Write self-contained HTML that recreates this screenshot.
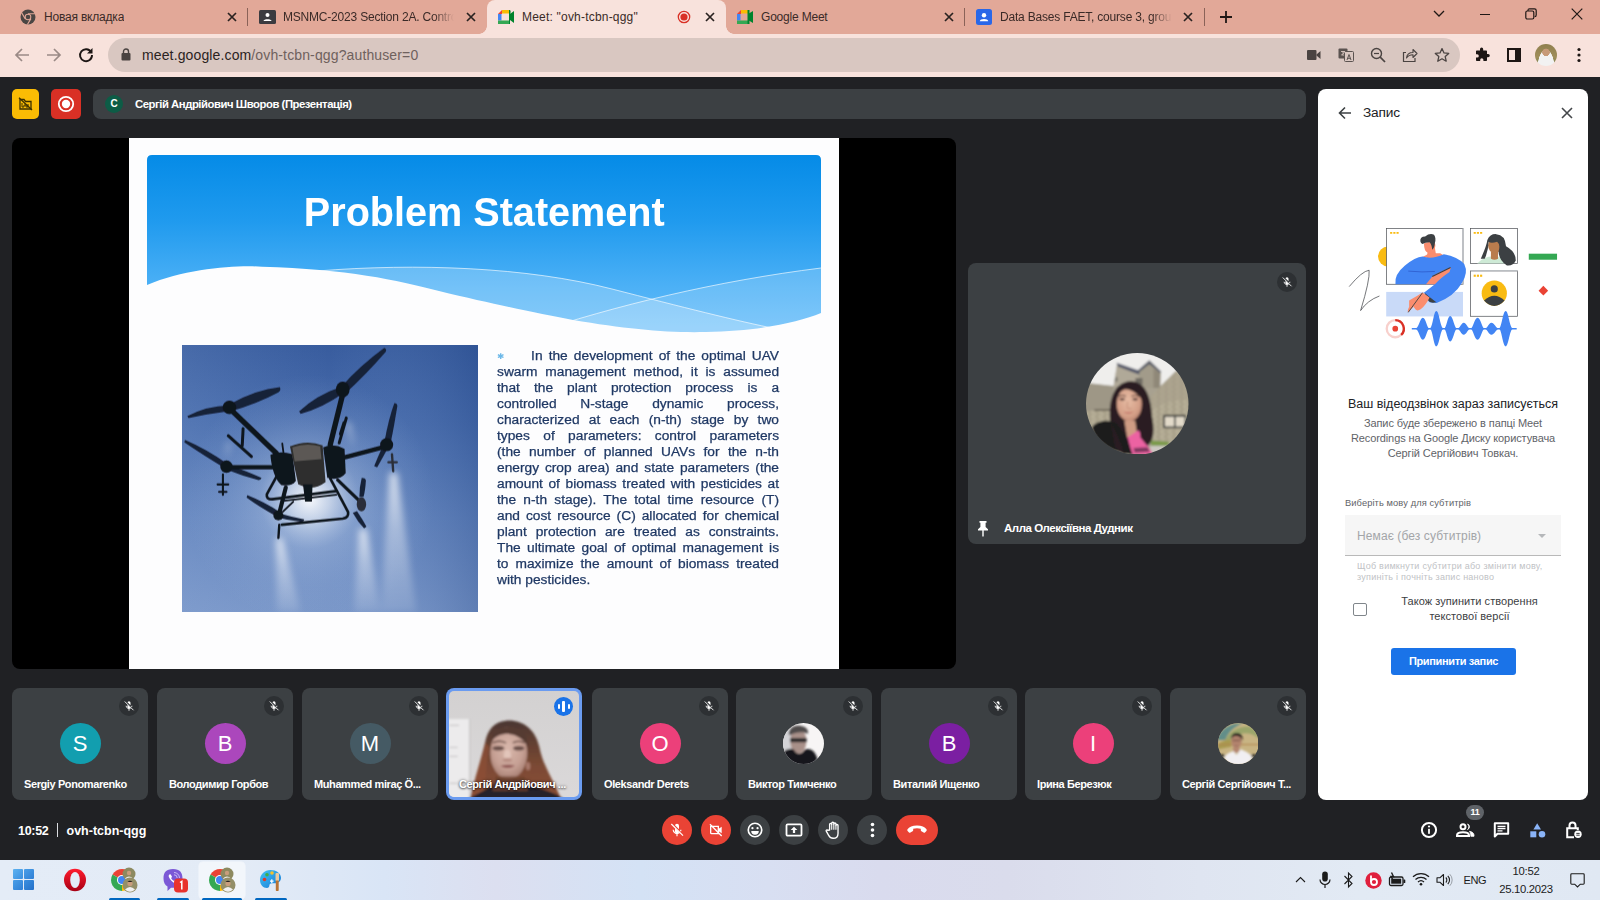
<!DOCTYPE html>
<html><head><meta charset="utf-8">
<style>
*{box-sizing:border-box;margin:0;padding:0}
html,body{width:1600px;height:900px;overflow:hidden;background:#202124;font-family:"Liberation Sans",sans-serif}
.a{position:absolute}
#tabbar{left:0;top:0;width:1600px;height:34px;background:#e2a898}
#toolbar{left:0;top:34px;width:1600px;height:43px;background:#f8e2dc}
#meet{left:0;top:77px;width:1600px;height:783px;background:#202124}
#taskbar{left:0;top:860px;width:1600px;height:40px;background:linear-gradient(90deg,#e4ecf7 0%,#e3ebf6 15%,#d9e5f6 24%,#dcdff0 31%,#d4e2f5 40%,#d8dff2 48%,#d9dbee 55%,#dadcec 63%,#dfe5f1 75%,#e2eaf4 85%,#e0e8f3 100%)}
.tabt{font-size:12px;letter-spacing:-0.2px;color:#3a2a27;top:10px;white-space:nowrap;overflow:hidden}
.tile{background:#3c4043;border-radius:8px}
.nm{color:#fff;font-size:11px;font-weight:bold;white-space:nowrap;letter-spacing:-0.4px}
.av{border-radius:50%;color:#fff;text-align:center;font-size:22px;line-height:42px;width:41px;height:41px}
.mic{width:20px;height:20px;border-radius:50%;background:#2d3033}
.cb{width:30px;height:30px;border-radius:50%;top:815px}
</style></head><body>
<div class="a" id="tabbar"></div>
<div class="a" id="toolbar"></div>
<div class="a" id="meet"></div>
<div class="a" id="taskbar"></div>
<!--TABS-->
<div class="a" style="left:487px;top:0;width:239px;height:34px;background:#f8e2dc;border-radius:8px 8px 0 0"></div>
<div class="a" style="left:479px;top:26px;width:8px;height:8px;background:radial-gradient(circle at 0 0,#e2a898 7.5px,#f8e2dc 8px)"></div>
<div class="a" style="left:726px;top:26px;width:8px;height:8px;background:radial-gradient(circle at 100% 0,#e2a898 7.5px,#f8e2dc 8px)"></div>
<!-- tab1 -->
<svg class="a" style="left:20px;top:9px" width="16" height="16" viewBox="0 0 16 16"><circle cx="8" cy="8" r="7.5" fill="#4a4543"/><circle cx="8" cy="8" r="3.3" fill="#e2a898"/><circle cx="8" cy="8" r="2.3" fill="#4a4543"/><path d="M8 4.7H15 M5.1 9.6 L1.7 3.8 M10.9 9.6 L7.4 15.5" stroke="#e2a898" stroke-width="1.1"/></svg>
<div class="a tabt" style="left:44px">Новая вкладка</div>
<svg class="a" style="left:227px;top:12px" width="10" height="10" viewBox="0 0 10 10"><path d="M1 1L9 9M9 1L1 9" stroke="#2a2220" stroke-width="1.7"/></svg>
<div class="a" style="left:247px;top:8px;width:1px;height:18px;background:#8a6258"></div>
<!-- tab2 -->
<svg class="a" style="left:259px;top:10px" width="17" height="14" viewBox="0 0 17 14"><rect width="17" height="14" rx="1.5" fill="#3b3b40"/><circle cx="8.5" cy="5" r="2" fill="#fff"/><path d="M4.5 11c0-2.5 8-2.5 8 0z" fill="#fff"/></svg>
<div class="a tabt" style="left:283px;width:171px;-webkit-mask-image:linear-gradient(90deg,#000 88%,transparent)">MSNMC-2023 Section 2A. Contro</div>
<svg class="a" style="left:466px;top:12px" width="10" height="10" viewBox="0 0 10 10"><path d="M1 1L9 9M9 1L1 9" stroke="#2a2220" stroke-width="1.7"/></svg>
<!-- tab3 active -->
<svg class="a" style="left:498px;top:10px" width="16" height="14" viewBox="0 0 16 14"><path d="M0 4L4 0V4z" fill="#ea4335"/><rect x="4" y="0" width="7" height="3.5" fill="#fbbc04"/><rect x="0" y="4" width="3.5" height="6.5" fill="#4285f4"/><rect x="0" y="10.5" width="11" height="3.5" fill="#34a853"/><path d="M11 0v14l1-0V10l4 3V1l-4 3V1.2z" fill="#00832d"/><path d="M11 0h0.5q1 0 1 1.2V4L11 5.5z" fill="#00832d"/></svg>
<div class="a tabt" style="left:522px;letter-spacing:0.2px">Meet: "ovh-tcbn-qgg"</div>
<svg class="a" style="left:677px;top:10px" width="14" height="14" viewBox="0 0 14 14"><circle cx="7" cy="7" r="5.7" fill="none" stroke="#d93025" stroke-width="1.3"/><circle cx="7" cy="7" r="3.6" fill="#d93025"/></svg>
<svg class="a" style="left:705px;top:12px" width="10" height="10" viewBox="0 0 10 10"><path d="M1 1L9 9M9 1L1 9" stroke="#2a2220" stroke-width="1.7"/></svg>
<!-- tab4 -->
<svg class="a" style="left:737px;top:10px" width="16" height="14" viewBox="0 0 16 14"><path d="M0 4L4 0V4z" fill="#ea4335"/><rect x="4" y="0" width="7" height="3.5" fill="#fbbc04"/><rect x="0" y="4" width="3.5" height="6.5" fill="#4285f4"/><rect x="0" y="10.5" width="11" height="3.5" fill="#34a853"/><path d="M11 0v14V10l5 3V1l-5 3z" fill="#00832d"/><rect x="10.5" y="0" width="2" height="14" fill="#00832d"/></svg>
<div class="a tabt" style="left:761px">Google Meet</div>
<svg class="a" style="left:944px;top:12px" width="10" height="10" viewBox="0 0 10 10"><path d="M1 1L9 9M9 1L1 9" stroke="#2a2220" stroke-width="1.7"/></svg>
<div class="a" style="left:964px;top:8px;width:1px;height:18px;background:#8a6258"></div>
<!-- tab5 -->
<svg class="a" style="left:976px;top:9px" width="16" height="16" viewBox="0 0 16 16"><rect width="16" height="16" rx="2.5" fill="#2a67e8"/><circle cx="8" cy="6.2" r="2.2" fill="#fff"/><path d="M3.8 12.3c0-3 8.4-3 8.4 0z" fill="#fff"/></svg>
<div class="a tabt" style="left:1000px;width:172px;-webkit-mask-image:linear-gradient(90deg,#000 88%,transparent)">Data Bases FAET, course 3, group</div>
<svg class="a" style="left:1183px;top:12px" width="10" height="10" viewBox="0 0 10 10"><path d="M1 1L9 9M9 1L1 9" stroke="#2a2220" stroke-width="1.7"/></svg>
<div class="a" style="left:1204px;top:8px;width:1px;height:18px;background:#8a6258"></div>
<svg class="a" style="left:1219px;top:10px" width="14" height="14" viewBox="0 0 14 14"><path d="M7 1v12M1 7h12" stroke="#1f1715" stroke-width="1.8"/></svg>
<!-- window controls -->
<svg class="a" style="left:1433px;top:9px" width="12" height="10" viewBox="0 0 12 10"><path d="M1 2l5 5 5-5" fill="none" stroke="#1f1715" stroke-width="1.3"/></svg>
<div class="a" style="left:1480px;top:14px;width:10px;height:1px;background:#1f1715"></div>
<svg class="a" style="left:1525px;top:8px" width="12" height="12" viewBox="0 0 12 12"><rect x="0.8" y="3" width="8" height="8" rx="1.5" fill="none" stroke="#1f1715" stroke-width="1.2"/><path d="M3 3V2.3q0-1.5 1.5-1.5H9.5q1.7 0 1.7 1.7V7q0 1.6-1.5 1.6" fill="none" stroke="#1f1715" stroke-width="1.2"/></svg>
<svg class="a" style="left:1571px;top:8px" width="12" height="12" viewBox="0 0 12 12"><path d="M0.7 0.7l10.6 10.6M11.3 0.7L0.7 11.3" stroke="#1f1715" stroke-width="1.2"/></svg>

<!--/TABS-->
<!--TOOLBAR-->
<div class="a" style="left:108px;top:38px;width:1352px;height:34px;border-radius:17px;background:#d9c7c1"></div>
<svg class="a" style="left:14px;top:47px" width="16" height="16" viewBox="0 0 16 16"><path d="M15 8H2M8 2L2 8l6 6" fill="none" stroke="#9a8a86" stroke-width="1.7"/></svg>
<svg class="a" style="left:46px;top:47px" width="16" height="16" viewBox="0 0 16 16"><path d="M1 8H14M8 2l6 6-6 6" fill="none" stroke="#9a8a86" stroke-width="1.7"/></svg>
<svg class="a" style="left:78px;top:47px" width="16" height="16" viewBox="0 0 16 16"><path d="M13.2 5.2A6 6 0 1 0 14 8" fill="none" stroke="#1d1614" stroke-width="1.9"/><path d="M14.5 1v5.5H9z" fill="#1d1614"/></svg>
<svg class="a" style="left:121px;top:48px" width="10" height="13" viewBox="0 0 10 13"><rect x="0.5" y="5" width="9" height="7.5" rx="1" fill="#4a4341"/><path d="M2.5 5V3.5a2.5 2.5 0 0 1 5 0V5" fill="none" stroke="#4a4341" stroke-width="1.4"/></svg>
<div class="a" style="left:142px;top:47px;font-size:14px;color:#2b2321;white-space:nowrap;letter-spacing:0.13px">meet.google.com<span style="color:#6f615d">/ovh-tcbn-qgg?authuser=0</span></div>
<!-- right icons in url -->
<svg class="a" style="left:1307px;top:49px" width="14" height="12" viewBox="0 0 14 12"><rect x="0" y="1" width="9.5" height="10" rx="1" fill="#4a4341"/><path d="M9.5 5.5L13.5 2v8L9.5 6.5z" fill="#4a4341"/></svg>
<svg class="a" style="left:1338px;top:47px" width="16" height="16" viewBox="0 0 16 16"><rect x="0.5" y="1.5" width="9" height="10" rx="1" fill="#5b5350"/><rect x="6.5" y="4.5" width="9" height="10" rx="1" fill="#d9c7c1" stroke="#5b5350" stroke-width="1"/><path d="M3 4.5h4M5 4v5M3.2 8c2-0.5 3-2 3.3-3.5" stroke="#d9c7c1" stroke-width="0.9" fill="none"/><path d="M9 13l2-5.5 2 5.5M9.8 11.3h2.4" stroke="#5b5350" stroke-width="1" fill="none"/></svg>
<svg class="a" style="left:1370px;top:47px" width="16" height="16" viewBox="0 0 16 16"><circle cx="6.5" cy="6.5" r="5" fill="none" stroke="#4a4341" stroke-width="1.4"/><path d="M10.2 10.2L15 15" stroke="#4a4341" stroke-width="1.7"/><path d="M4 6.5h5" stroke="#4a4341" stroke-width="1.2"/></svg>
<svg class="a" style="left:1402px;top:47px" width="16" height="16" viewBox="0 0 16 16"><path d="M4 5.5H1.5V14.5H13V11" fill="none" stroke="#4a4341" stroke-width="1.2"/><path d="M4.5 11c.5-4 3-5.5 6.5-5.5V2.5L15 6.5 11 10.5V7.7C8 7.7 6 8.5 4.5 11z" fill="none" stroke="#4a4341" stroke-width="1.1" stroke-linejoin="round"/></svg>
<svg class="a" style="left:1434px;top:47px" width="16" height="16" viewBox="0 0 16 16"><path d="M8 1.6l2 4.3 4.7.5-3.5 3.2 1 4.6L8 11.8l-4.2 2.4 1-4.6L1.3 6.4 6 5.9z" fill="none" stroke="#4a4341" stroke-width="1.3" stroke-linejoin="round"/></svg>
<!-- extensions etc -->
<svg class="a" style="left:1474px;top:47px" width="16" height="16" viewBox="0 0 16 16"><path d="M6 2.2a1.6 1.6 0 0 1 3.2 0V3.5h3q.8 0 .8.8v2.7h1.2a1.6 1.6 0 0 1 0 3.2H13v3q0 .8-.8.8H9.4v-1.2a1.6 1.6 0 0 0-3.2 0V14H2.8q-.8 0-.8-.8V10.5h1.2a1.6 1.6 0 0 0 0-3.2H2V4.3q0-.8.8-.8H6z" fill="#1d1614"/></svg>
<svg class="a" style="left:1507px;top:48px" width="14" height="14" viewBox="0 0 14 14"><rect x="1" y="1" width="12" height="12" fill="none" stroke="#1d1614" stroke-width="2"/><rect x="8" y="1" width="5" height="12" fill="#1d1614"/></svg>
<div class="a" style="left:1535px;top:44px;width:22px;height:22px;border-radius:50%;background:radial-gradient(circle at 50% 38%,#c79a78 0 3.5px,transparent 4px),radial-gradient(ellipse at 50% 105%,#f2f2f2 0 8px,transparent 8.5px),linear-gradient(#8f7f4e,#a08e5a 60%,#6e7e4a)"></div>
<svg class="a" style="left:1577px;top:47px" width="4" height="16" viewBox="0 0 4 16"><circle cx="2" cy="2.5" r="1.6" fill="#1d1614"/><circle cx="2" cy="8" r="1.6" fill="#1d1614"/><circle cx="2" cy="13.5" r="1.6" fill="#1d1614"/></svg>

<!--/TOOLBAR-->
<!--MEETTOP-->
<div class="a" style="left:12px;top:89px;width:27px;height:30px;border-radius:5px;background:#fbbc04"></div>
<svg class="a" style="left:18px;top:97px" width="15" height="14" viewBox="0 0 15 14"><path d="M2 2.5V12H13V4.5H7.5L6 2.5z" fill="none" stroke="#3c3000" stroke-width="1.3"/><path d="M4 6v4h2V8h2v2h2V7" fill="none" stroke="#3c3000" stroke-width="1"/><path d="M1 0.8L14 13" stroke="#3c3000" stroke-width="1.3"/></svg>
<div class="a" style="left:51px;top:89px;width:30px;height:30px;border-radius:5px;background:#d93025"></div>
<svg class="a" style="left:57px;top:95px" width="18" height="18" viewBox="0 0 18 18"><circle cx="9" cy="9" r="7.2" fill="none" stroke="#fff" stroke-width="1.8"/><circle cx="9" cy="9" r="4.2" fill="#fff"/></svg>
<div class="a tile" style="left:93px;top:89px;width:1213px;height:30px"></div>
<div class="a" style="left:105px;top:95px;width:18px;height:18px;border-radius:50%;background:#0d5c46;color:#fff;font-size:10px;font-weight:bold;text-align:center;line-height:18px">С</div>
<div class="a nm" style="left:135px;top:98px;font-size:11.3px;letter-spacing:-0.45px">Сергій Андрійович Шворов (Презентація)</div>

<!--/MEETTOP-->
<!--SLIDE-->
<div class="a" style="left:12px;top:138px;width:944px;height:531px;border-radius:8px;background:#000"></div>
<div class="a" style="left:129px;top:138px;width:710px;height:531px;background:#fdfdfe"></div>
<svg class="a" style="left:147px;top:155px" width="674" height="186" viewBox="0 0 674 186">
<defs><linearGradient id="hg" x1="0" y1="0" x2="0" y2="1"><stop offset="0" stop-color="#058be7"/><stop offset="0.35" stop-color="#1f9aee"/><stop offset="0.7" stop-color="#4bb0f6"/><stop offset="1" stop-color="#6cc0fa"/></linearGradient></defs>
<path d="M0 5Q0 0 5 0H669Q674 0 674 5V186H0z" fill="url(#hg)"/>
<path d="M170 116C270 108 380 112 465 134C535 152 590 166 630 174L674 160V186H170z" fill="#fff" opacity="0.22"/>
<path d="M380 180C470 150 570 126 674 113V186H380z" fill="#fff" opacity="0.17"/>
<path d="M170 116C270 108 380 112 465 134C535 152 590 166 630 174" fill="none" stroke="#fff" stroke-width="0.8" opacity="0.8"/>
<path d="M380 180C470 150 570 126 674 113" fill="none" stroke="#fff" stroke-width="0.8" opacity="0.8"/>
<path d="M0 130C40 113 90 110 115 111.7C200 114 250 125 292 136C350 150 390 158 426 165C480 174 520 178 559 177C610 176 650 168 674 158V186H0z" fill="#fdfdfe"/>
</svg>
<div class="a" id="ttl" style="left:129px;top:187.5px;width:710px;text-align:center;color:#fff;font-weight:bold;font-size:40px;line-height:48px;white-space:nowrap"><span style="display:inline-block;transform:scaleX(0.99);transform-origin:50% 50%">Problem Statement</span></div>
<!--DRONE-->
<svg class="a" style="left:182px;top:345px" width="296" height="267" viewBox="0 0 998 900" preserveAspectRatio="none">
<defs>
<linearGradient id="sky" x1="0" y1="0" x2="0" y2="1"><stop offset="0" stop-color="#385c9e"/><stop offset="0.3" stop-color="#486cac"/><stop offset="0.65" stop-color="#6384bd"/><stop offset="1" stop-color="#7996c8"/></linearGradient>
<linearGradient id="skyr" x1="0" y1="0" x2="1" y2="0"><stop offset="0" stop-color="#9fbce6" stop-opacity="0.15"/><stop offset="0.5" stop-color="#8fb0e0" stop-opacity="0"/><stop offset="1" stop-color="#1c3f80" stop-opacity="0.28"/></linearGradient>
<radialGradient id="sun" cx="430" cy="520" r="420" gradientUnits="userSpaceOnUse"><stop offset="0" stop-color="#fff" stop-opacity="0.95"/><stop offset="0.16" stop-color="#f4f8fd" stop-opacity="0.68"/><stop offset="0.4" stop-color="#c5d6ee" stop-opacity="0.3"/><stop offset="0.7" stop-color="#a9c0e2" stop-opacity="0.14"/><stop offset="1" stop-color="#9fb8dd" stop-opacity="0"/></radialGradient>
<linearGradient id="spr" x1="0" y1="0" x2="0" y2="1"><stop offset="0" stop-color="#fff" stop-opacity="0.75"/><stop offset="0.4" stop-color="#fff" stop-opacity="0.4"/><stop offset="1" stop-color="#fff" stop-opacity="0.12"/></linearGradient>
<filter id="bl" x="-30%" y="-10%" width="160%" height="120%"><feGaussianBlur stdDeviation="13"/></filter>
<filter id="bs" x="-10%" y="-10%" width="120%" height="120%"><feGaussianBlur stdDeviation="2.5"/></filter>
</defs>
<rect width="998" height="900" fill="url(#sky)"/>
<rect width="998" height="900" fill="url(#skyr)"/>
<rect width="998" height="900" fill="url(#sun)"/>
<g filter="url(#bl)" fill="url(#spr)">
<path d="M700 430L725 430L790 900L670 900z"/>
<path d="M318 650L338 650L400 900L320 900z"/>
<path d="M598 620L622 620L670 900L580 900z"/>
<path d="M552 262L566 262L586 335L566 335z" opacity="0.8"/>
<path d="M150 330L165 330L160 380L140 380z" opacity="0.5"/>
</g>
<g filter="url(#bs)">
<g fill="#172038">
<path d="M18 240Q80 205 160 203L165 222Q90 232 22 246z"/><path d="M160 200Q250 150 330 142Q335 152 325 160Q250 200 168 222z"/>
<path d="M395 224Q450 170 538 140L548 160Q470 215 400 232z"/><path d="M538 140Q600 70 682 10Q692 14 686 24Q620 100 552 162z"/>
<path d="M648 408Q668 360 684 326L700 336Q680 375 658 412z"/><path d="M682 330Q696 250 716 196Q726 196 726 206Q716 270 702 338z"/>
<path d="M10 320Q80 350 152 400L146 416Q70 370 8 328z"/><path d="M150 402Q220 425 268 448Q266 456 258 455Q200 440 146 418z"/>
<path d="M220 506Q280 530 328 562L320 578Q260 545 218 514z"/><path d="M322 566Q370 580 412 588Q412 596 404 596Q360 592 318 580z"/>
<path d="M606 448Q618 448 620 456Q618 490 612 512L598 512Q598 480 606 448z"/><path d="M576 566L590 560Q610 590 622 612L614 618Q592 596 576 566z"/>
</g>
<g stroke="#10131c" stroke-linecap="round" fill="none">
<path d="M165 218L318 365" stroke-width="18"/>
<path d="M542 165L500 335" stroke-width="18"/>
<path d="M688 342L550 378" stroke-width="15"/>
<path d="M152 412L305 412" stroke-width="15"/>
<path d="M525 455L603 530" stroke-width="11"/>
<path d="M350 480L326 575" stroke-width="14"/>
<path d="M318 445L286 503Q283 520 304 520L522 492" stroke-width="9"/>
<path d="M500 450L560 563Q563 582 542 585L337 606" stroke-width="9"/>
<path d="M345 525L520 505M375 528L340 562" stroke-width="6"/>
<path d="M206 282L203 340M156 306L234 376" stroke-width="10"/>
<path d="M554 246L530 330M546 262L534 300" stroke-width="10"/>
<path d="M338 332L342 362" stroke-width="6"/>
<path d="M328 606L325 650" stroke-width="8"/>
<path d="M138 436V505M120 470H156M125 495L150 495" stroke-width="7"/>
<path d="M708 368L712 425M696 395H724" stroke-width="8" stroke="#2c2f38"/>
</g>
<g fill="#10131c">
<circle cx="160" cy="210" r="23"/><ellipse cx="542" cy="150" rx="23" ry="27"/><circle cx="690" cy="336" r="22"/><circle cx="150" cy="410" r="21"/><ellipse cx="605" cy="537" rx="16" ry="24" fill="#2c2f3a"/><circle cx="325" cy="574" r="17"/>
<path d="M298 370Q330 355 372 368L384 458Q370 478 335 472Q305 445 298 370z"/>
<path d="M476 345Q510 330 548 350L552 432Q532 458 490 448z"/>
<path d="M364 342Q420 318 474 338L484 462Q440 495 392 470z" fill="#2f2f2f"/>
<path d="M372 345Q420 328 466 342L470 385L380 392z" fill="#5b5955"/>
<path d="M408 470L440 470L438 528L415 528z"/>
</g>
</g>
</svg>

<!--/DRONE-->
<div class="a" id="stxt" style="left:497px;top:347.5px;width:256.4px;transform:scaleX(1.1);transform-origin:0 0;font-size:12.5px;line-height:16px;color:#1f3864;-webkit-text-stroke:0.25px #1f3864;text-align:justify;text-align-last:justify">
<div><span style="color:#6cb8e8;font-size:8px;vertical-align:1.5px;-webkit-text-stroke:0">✱</span><span style="display:inline-block;width:24px"></span>In the development of the optimal UAV</div>
<div>swarm management method, it is assumed</div>
<div>that the plant protection process is a</div>
<div>controlled N-stage dynamic process,</div>
<div>characterized at each (n-th) stage by two</div>
<div>types of parameters: control parameters</div>
<div>(the number of planned UAVs for the n-th</div>
<div>energy crop area) and state parameters (the</div>
<div>amount of biomass treated with pesticides at</div>
<div>the n-th stage). The total time resource (T)</div>
<div>and cost resource (C) allocated for chemical</div>
<div>plant protection are treated as constraints.</div>
<div>The ultimate goal of optimal management is</div>
<div>to maximize the amount of biomass treated</div>
<div style="text-align-last:left">with pesticides.</div>
</div>

<!--/SLIDE-->
<!--ALLA-->
<div class="a tile" style="left:968px;top:263px;width:338px;height:281px"></div>
<div class="a mic" style="left:1277px;top:272px"></div>
<svg class="a micsvg" style="left:1281px;top:276px" width="12" height="12" viewBox="0 0 24 24"><use href="#micoff"/></svg>
<svg class="a" style="left:1086px;top:352.5px" width="102.5" height="101.7" viewBox="155 135 615 610">
<defs><clipPath id="ac"><ellipse cx="462.5" cy="440" rx="307.5" ry="305"/></clipPath><filter id="ab" x="-5%" y="-5%" width="110%" height="110%"><feGaussianBlur stdDeviation="5"/></filter>
<radialGradient id="fc" cx="0.45" cy="0.4" r="0.65"><stop offset="0" stop-color="#e6bba3"/><stop offset="0.7" stop-color="#d5a088"/><stop offset="1" stop-color="#b9826e"/></radialGradient>
<pattern id="stn" width="46" height="30" patternUnits="userSpaceOnUse"><rect width="46" height="30" fill="#aea68f"/><rect x="2" y="2" width="20" height="11" rx="3" fill="#bcb49c"/><rect x="26" y="3" width="17" height="10" rx="3" fill="#a39b85"/><rect x="12" y="17" width="22" height="10" rx="3" fill="#b7af98"/><rect x="37" y="18" width="12" height="9" rx="3" fill="#9c947e"/></pattern></defs>
<g clip-path="url(#ac)"><g filter="url(#ab)">
<rect x="140" y="120" width="650" height="640" fill="#efeeec"/>
<path d="M140 312L320 333L342 198L470 245L535 195L605 250L600 335L700 238L790 330V760H140z" fill="#a8a190"/>
<path d="M322 333L342 205L468 250L505 290L500 335z" fill="#b0a998"/>
<path d="M338 193L346 216L468 262L512 292L472 240z" fill="#55586a"/>
<path d="M463 242L535 178L607 247L600 256L535 202L472 252z" fill="#5a5d68"/>
<path d="M474 252L535 204L600 256V345H474z" fill="#a29b8a"/>
<path d="M560 230L600 256V345H560z" fill="#8f8878"/>
<path d="M140 315L320 335V485H140z" fill="#9e9786"/>
<rect x="140" y="482" width="190" height="280" fill="url(#stn)"/>
<path d="M545 395L700 238L790 330V700H545z" fill="url(#stn)"/>
<path d="M545 395L700 238L790 330V420Q660 400 545 480z" fill="#a69e8b" opacity="0.6"/>
<rect x="452" y="285" width="42" height="40" fill="#6e6a62"/><rect x="330" y="280" width="14" height="26" fill="#76726a"/>
<rect x="205" y="472" width="100" height="11" fill="#6e675a"/>
<rect x="617" y="506" width="137" height="80" fill="#3f413e"/>
<rect x="629" y="518" width="54" height="58" fill="#e2dac9"/><rect x="693" y="518" width="53" height="58" fill="#e2dac9"/>
<path d="M545 660L655 668L645 692L545 692z" fill="#7a9a4a"/>
<path d="M540 692H700V760H540z" fill="#cbc7c0"/>
<path d="M302 565C285 430 318 308 422 304C522 304 547 420 552 520C568 600 562 660 525 692L385 742L305 702z" fill="#2a1e23"/>
<ellipse cx="415" cy="442" rx="75" ry="103" fill="url(#fc)"/>
<path d="M336 405C340 332 400 316 440 330C482 340 502 382 497 425C472 382 430 352 392 352C362 360 346 382 336 405z" fill="#2a1e23"/>
<path d="M385 540L450 540L462 622L402 642z" fill="#cf9c84"/>
<ellipse cx="372" cy="413" rx="17" ry="7" fill="#3a2826"/><ellipse cx="450" cy="413" rx="17" ry="7" fill="#3a2826"/>
<path d="M350 394q22-10 44 0M428 394q22-10 44 0" stroke="#3a2826" stroke-width="6" fill="none"/>
<path d="M405 425q-6 30 0 42q10 6 22 0" stroke="#c48e78" stroke-width="6" fill="none"/>
<path d="M378 486Q410 500 444 484Q410 512 378 486z" fill="#b5524f"/>
<path d="M405 640L470 598L525 690L560 745H430z" fill="#ec62a2"/>
<path d="M440 705l85-5l12 28l-90 4z" fill="#5a2a48" opacity="0.75"/>
<path d="M190 580C225 535 300 530 340 560L402 642L435 747L330 722C258 692 200 640 190 580z" fill="#1a1a1d"/>
<path d="M302 545C322 600 362 650 382 742L330 702z" fill="#2a1e23"/>
<path d="M472 520C502 560 545 620 522 692L482 642z" fill="#2a1e23"/>
</g></g></svg>
<svg class="a" style="left:977px;top:520px" width="12" height="17" viewBox="0 0 12 17"><path d="M2.5 1h7v1.8H8.6V7L11 9.3V10.5H6.7V16L6 17 5.3 16V10.5H1V9.3L3.4 7V2.8H2.5z" fill="#fff"/></svg>
<div class="a nm" style="left:1004px;top:522px;font-size:11.5px;letter-spacing:-0.45px">Алла Олексіївна Дудник</div>
<svg width="0" height="0" style="position:absolute"><defs><g id="micoff"><path d="M12 2.5a3 3 0 0 1 3 3v5.2l-6-6V5.5a3 3 0 0 1 3-3zM9 9.3l6 6a3 3 0 0 1-6-3.3z" fill="#fff"/><path d="M6.2 11.5a5.8 5.8 0 0 0 9.6 4.3M17.8 11.5c0 .9-.2 1.7-.5 2.4M12 17.5V21.5" stroke="#fff" stroke-width="1.7" fill="none"/><path d="M3.5 3L21 20.5" stroke="#fff" stroke-width="1.8"/></g></defs></svg>

<!--/ALLA-->
<!--PANEL-->
<div class="a" style="left:1318px;top:89px;width:270px;height:711px;border-radius:8px;background:#fff"></div>
<svg class="a" style="left:1338px;top:106px" width="14" height="14" viewBox="0 0 14 14"><path d="M13 7H2M7 1.5L1.5 7 7 12.5" fill="none" stroke="#3c4043" stroke-width="1.6"/></svg>
<div class="a" style="left:1363px;top:104.7px;font-size:13.7px;color:#202124;letter-spacing:-0.2px">Запис</div>
<svg class="a" style="left:1561px;top:107px" width="12" height="12" viewBox="0 0 12 12"><path d="M1 1l10 10M11 1L1 11" stroke="#44474a" stroke-width="1.6"/></svg>
<!--ILLUS-->
<svg class="a" style="left:1330px;top:200px" width="250" height="160" viewBox="0 0 1406 900">
<circle cx="326" cy="318" r="56" fill="#f9bb12"/>
<rect x="316" y="517" width="432" height="138" fill="#c9daf8"/>
<rect x="318" y="160" width="430" height="314" fill="#fff" stroke="#4d5156" stroke-width="4"/>
<rect x="744" y="160" width="6" height="316" fill="#bdc1c6"/>
<rect x="790" y="160" width="264" height="197" fill="#fff" stroke="#4d5156" stroke-width="4"/>
<rect x="790" y="399" width="264" height="255" fill="#fff" stroke="#4d5156" stroke-width="4"/>
<rect x="790" y="395" width="266" height="6" fill="#bdc1c6"/>
<g fill="#f9bb12"><rect x="338" y="180" width="12" height="10"/><rect x="356" y="180" width="12" height="10"/><rect x="374" y="180" width="12" height="10"/><rect x="808" y="180" width="12" height="10"/><rect x="826" y="180" width="12" height="10"/><rect x="844" y="180" width="12" height="10"/><rect x="808" y="420" width="12" height="12"/><rect x="826" y="420" width="12" height="12"/><rect x="844" y="420" width="12" height="12"/></g>
<!-- woman -->
<path d="M828 357Q860 318 920 316Q975 318 1010 357z" fill="#ceead6"/>
<path d="M905 290h40v40q-20 12-40 0z" fill="#b97c4d"/>
<ellipse cx="927" cy="255" rx="38" ry="45" fill="#b97c4d"/>
<path d="M848 330Q880 260 885 225Q900 190 935 192Q985 195 990 260Q1045 290 1045 340Q1030 372 995 368Q950 340 948 290Q960 250 940 235Q905 245 892 235Q890 290 870 330z" fill="#3c4043"/>
<!-- yellow avatar -->
<circle cx="924" cy="524" r="71" fill="#f9bb12"/>
<circle cx="924" cy="500" r="20" fill="#3c4043"/>
<path d="M866 566Q924 510 982 566Q955 596 924 596Q893 596 866 566z" fill="#3c4043"/>
<!-- man -->
<path d="M528 245Q530 290 548 296L545 330L600 330L590 270Q598 240 580 228z" fill="#fa8d6e"/>
<path d="M508 232Q505 205 535 205Q560 185 585 195Q598 215 590 240Q588 268 575 280Q572 250 560 238Q535 240 520 248Q510 245 508 232z" fill="#3c4043"/>
<path d="M520 320L560 300L620 300L640 312L580 330z" fill="#fa8d6e"/>
<path d="M368 474Q360 420 420 370Q480 320 520 318Q575 335 640 305Q720 320 755 360Q780 410 740 470Q700 540 600 580L560 575Q545 545 530 520L590 474z" fill="#4285f4"/>
<path d="M440 400Q520 408 590 402" stroke="#2a56c6" stroke-width="4" fill="none"/>
<path d="M540 474L580 425Q640 395 680 380L672 405Q620 440 590 474z" fill="#fa8d6e"/>
<path d="M575 430L678 380" stroke="#3c4043" stroke-width="7"/>
<path d="M530 520L560 545L598 575Q570 582 555 570z" fill="#3c4043"/>
<path d="M445 565Q490 540 520 520L560 548Q540 590 510 615Q490 628 480 615L470 600L440 632Q432 628 445 600z" fill="#fa8d6e"/>
<path d="M520 522L440 632" stroke="#3c4043" stroke-width="5"/>
<!-- scribble -->
<path d="M108 487Q180 400 220 395Q225 450 172 622Q210 565 278 540" fill="none" stroke="#3c4043" stroke-width="4"/>
<!-- green bar, red diamond -->
<rect x="1118" y="302" width="159" height="34" fill="#34a853"/>
<path d="M1200 483L1227 510L1200 537L1173 510z" fill="#ea4335"/>
<!-- record icon -->
<circle cx="367" cy="724" r="48" fill="none" stroke="#f8d0cc" stroke-width="13"/>
<path d="M367 676A48 48 0 0 1 400 759" fill="none" stroke="#d93025" stroke-width="13"/>
<circle cx="367" cy="724" r="16" fill="#ea4335"/>
<!-- waveform -->
<path d="M460 724H1050" stroke="#4285f4" stroke-width="8"/>
<path d="M478 724C500 724 505 662 522 662C540 662 545 724 560 724C578 724 582 625 598 625C615 625 620 724 640 724C655 724 660 652 676 652C692 652 700 724 715 724C730 724 738 690 752 690C768 690 775 724 790 724C805 724 812 662 830 662C848 662 855 724 870 724C885 724 892 690 908 690C925 690 935 724 950 724C965 724 972 625 988 625C1005 625 1010 724 1030 724C1010 724 1005 823 988 823C972 823 965 724 950 724C935 724 925 758 908 758C892 758 885 724 870 724C855 724 848 786 830 786C812 786 805 724 790 724C775 724 768 758 752 758C738 758 730 724 715 724C700 724 692 796 676 796C660 796 655 724 640 724C620 724 615 823 598 823C582 823 578 724 560 724C545 724 540 786 522 786C505 786 500 724 478 724z" fill="#4285f4"/>
</svg>

<!--/ILLUS-->
<div class="a" style="left:1318px;top:397px;width:270px;text-align:center;font-size:12.5px;color:#202124;letter-spacing:-0.02px">Ваш відеодзвінок зараз записується</div>
<div class="a" style="left:1338px;top:416px;width:230px;text-align:center;font-size:11px;line-height:15px;color:#5f6368;letter-spacing:-0.1px">Запис буде збережено в папці Meet<br>Recordings на Google Диску користувача<br>Сергій Сергійович Товкач.</div>
<div class="a" style="left:1345px;top:498px;font-size:9.3px;color:#5f6368;letter-spacing:0.1px">Виберіть мову для субтитрів</div>
<div class="a" style="left:1345px;top:515px;width:216px;height:41px;background:#f6f6f6;border-bottom:1px solid #b9b9b9"></div>
<div class="a" style="left:1357px;top:529px;font-size:12px;color:#a3a5a8;letter-spacing:0.1px">Немає (без субтитрів)</div>
<div class="a" style="left:1538px;top:534px;width:0;height:0;border-left:4px solid transparent;border-right:4px solid transparent;border-top:4px solid #b5b7ba"></div>
<div class="a" style="left:1357px;top:561px;font-size:9px;line-height:11px;color:#c0c2c5;letter-spacing:0.25px">Щоб вимкнути субтитри або змінити мову,<br>зупиніть і почніть запис наново</div>
<div class="a" style="left:1353px;top:603px;width:14px;height:13px;border:1px solid #80868b;border-radius:2px;background:#fff"></div>
<div class="a" style="left:1390px;top:594px;width:159px;text-align:center;font-size:11px;line-height:15px;color:#3c4043;letter-spacing:0.05px">Також зупинити створення<br>текстової версії</div>
<div class="a" style="left:1391px;top:648px;width:125px;height:27px;border-radius:3px;background:#1a73e8;color:#fff;font-size:11px;font-weight:bold;text-align:center;line-height:27px;letter-spacing:-0.35px">Припинити запис</div>

<!--/PANEL-->
<!--THUMBS-->
<div class="a tile" style="left:12px;top:688px;width:136px;height:112px"></div>
<div class="a mic" style="left:119px;top:696px"></div><svg class="a" style="left:123px;top:700px" width="12" height="12" viewBox="0 0 24 24"><use href="#micoff"/></svg>
<div class="a av" style="left:59.5px;top:722.5px;background:#129eaf">S</div>
<div class="a nm" style="left:24px;top:778px">Sergiy Ponomarenko</div>
<div class="a tile" style="left:157px;top:688px;width:136px;height:112px"></div>
<div class="a mic" style="left:264px;top:696px"></div><svg class="a" style="left:268px;top:700px" width="12" height="12" viewBox="0 0 24 24"><use href="#micoff"/></svg>
<div class="a av" style="left:204.5px;top:722.5px;background:#ab47bc">В</div>
<div class="a nm" style="left:169px;top:778px">Володимир Горбов</div>
<div class="a tile" style="left:302px;top:688px;width:136px;height:112px"></div>
<div class="a mic" style="left:409px;top:696px"></div><svg class="a" style="left:413px;top:700px" width="12" height="12" viewBox="0 0 24 24"><use href="#micoff"/></svg>
<div class="a av" style="left:349.5px;top:722.5px;background:#455a64">M</div>
<div class="a nm" style="left:314px;top:778px">Muhammed miraç Ö...</div>
<div class="a" style="left:446px;top:688px;width:136px;height:112px;border-radius:8px;background:#6a9bf0;overflow:hidden">
<svg class="a" style="left:3px;top:3px;border-radius:5px" width="130" height="106" viewBox="67 65 942 768" preserveAspectRatio="none">
<defs><filter id="vb" x="-10%" y="-10%" width="120%" height="120%"><feGaussianBlur stdDeviation="9"/></filter><linearGradient id="wl" x1="0" y1="0" x2="0" y2="1"><stop offset="0" stop-color="#b5b3b3"/><stop offset="0.08" stop-color="#d3d1d1"/><stop offset="1" stop-color="#dbd9da"/></linearGradient><radialGradient id="fcv" cx="0.48" cy="0.4" r="0.62"><stop offset="0" stop-color="#d8b7ab"/><stop offset="0.65" stop-color="#c6a094"/><stop offset="1" stop-color="#a67e72"/></radialGradient><linearGradient id="hr" x1="0" y1="0" x2="0" y2="1"><stop offset="0" stop-color="#4a3630"/><stop offset="0.6" stop-color="#7d4a34"/><stop offset="1" stop-color="#8a4e34"/></linearGradient></defs>
<rect x="0" y="0" width="1100" height="900" fill="url(#wl)"/>
<g filter="url(#vb)">
<rect x="40" y="268" width="172" height="600" fill="#ecebec"/><rect x="212" y="268" width="10" height="600" fill="#c9c7c8"/>
<rect x="70" y="310" width="70" height="8" fill="#c5c3c4"/><rect x="70" y="470" width="60" height="8" fill="#c5c3c4"/><rect x="70" y="535" width="60" height="8" fill="#c5c3c4"/><rect x="70" y="730" width="60" height="8" fill="#c5c3c4"/>
<path d="M480 280C395 288 345 345 328 440C300 560 255 690 220 850H880C830 720 745 600 722 470C690 338 600 272 480 280z" fill="url(#hr)"/>
<path d="M330 440C300 560 255 690 220 850H330C330 700 340 560 360 470z" fill="#8f5034" opacity="0.7"/>
<ellipse cx="500" cy="515" rx="134" ry="188" fill="url(#fcv)"/>
<path d="M368 440C385 350 470 318 530 328C600 338 642 400 640 470C600 395 520 372 470 376C420 382 388 405 368 440z" fill="#553a32"/>
<ellipse cx="425" cy="480" rx="42" ry="17" fill="#6a4f49"/><ellipse cx="572" cy="480" rx="40" ry="17" fill="#6a4f49"/>
<path d="M385 440q45-22 95 0M530 440q42-20 85 0" stroke="#5b4038" stroke-width="10" fill="none"/>
<ellipse cx="490" cy="530" rx="26" ry="40" fill="#e2c5ba"/><ellipse cx="490" cy="565" rx="34" ry="14" fill="#b98f84"/>
<path d="M440 608Q495 590 545 606Q495 640 440 608z" fill="#8f5552"/>
<ellipse cx="640" cy="610" rx="16" ry="30" fill="#a8786a"/>
<path d="M200 850C300 790 380 770 420 705L600 705C640 770 800 770 900 850V900H200z" fill="#25242a"/>
<path d="M405 685L615 685L640 790L380 790z" fill="#70432f" opacity="0.85"/>
</g></svg>
<div class="a" style="left:108px;top:9px;width:19px;height:19px;border-radius:50%;background:#1a73e8"></div>
<div class="a" style="left:111.5px;top:16px;width:2px;height:5px;background:#fff;border-radius:1px"></div><div class="a" style="left:116px;top:13px;width:3px;height:11px;background:#fff;border-radius:1px"></div><div class="a" style="left:121.5px;top:16px;width:2px;height:5px;background:#fff;border-radius:1px"></div>
</div>
<div class="a nm" style="left:459px;top:778px;text-shadow:0 0 3px rgba(0,0,0,.6),0 1px 2px rgba(0,0,0,.5)">Сергій Андрійович ...</div>
<div class="a tile" style="left:592px;top:688px;width:136px;height:112px"></div>
<div class="a mic" style="left:699px;top:696px"></div><svg class="a" style="left:703px;top:700px" width="12" height="12" viewBox="0 0 24 24"><use href="#micoff"/></svg>
<div class="a av" style="left:639.5px;top:722.5px;background:#ec407a">O</div>
<div class="a nm" style="left:604px;top:778px">Oleksandr Derets</div>
<div class="a tile" style="left:736px;top:688px;width:136px;height:112px"></div>
<div class="a mic" style="left:843px;top:696px"></div><svg class="a" style="left:847px;top:700px" width="12" height="12" viewBox="0 0 24 24"><use href="#micoff"/></svg>
<svg class="a" style="left:783px;top:722.7px" width="41" height="41" viewBox="195 160 615 615"><defs><clipPath id="p1c"><circle cx="502.5" cy="467.5" r="307.5"/></clipPath><filter id="p1b" x="-10%" y="-10%" width="120%" height="120%"><feGaussianBlur stdDeviation="12"/></filter></defs><g clip-path="url(#p1c)"><rect x="150" y="120" width="700" height="700" fill="#f7f5f5"/><g filter="url(#p1b)"><rect x="150" y="260" width="180" height="320" fill="#d4d4d8"/><ellipse cx="425" cy="430" rx="122" ry="190" fill="#a89089"/><path d="M283 335C275 215 400 180 485 208C570 228 578 290 566 325C520 285 380 290 300 345z" fill="#4f4b4b"/><rect x="300" y="385" width="250" height="62" rx="12" fill="#2c2a2c"/><path d="M195 600C260 540 330 540 360 560C400 640 470 640 520 560C580 530 680 560 710 700L640 800H260z" fill="#18171a"/></g></g></svg>
<div class="a nm" style="left:748px;top:778px">Виктор Тимченко</div>
<div class="a tile" style="left:881px;top:688px;width:136px;height:112px"></div>
<div class="a mic" style="left:988px;top:696px"></div><svg class="a" style="left:992px;top:700px" width="12" height="12" viewBox="0 0 24 24"><use href="#micoff"/></svg>
<div class="a av" style="left:928.5px;top:722.5px;background:#7b1fa2">В</div>
<div class="a nm" style="left:893px;top:778px">Виталий Ищенко</div>
<div class="a tile" style="left:1025px;top:688px;width:136px;height:112px"></div>
<div class="a mic" style="left:1132px;top:696px"></div><svg class="a" style="left:1136px;top:700px" width="12" height="12" viewBox="0 0 24 24"><use href="#micoff"/></svg>
<div class="a av" style="left:1072.5px;top:722.5px;background:#ec407a">I</div>
<div class="a nm" style="left:1037px;top:778px">Ірина Березюк</div>
<div class="a tile" style="left:1170px;top:688px;width:136px;height:112px"></div>
<div class="a mic" style="left:1277px;top:696px"></div><svg class="a" style="left:1281px;top:700px" width="12" height="12" viewBox="0 0 24 24"><use href="#micoff"/></svg>
<svg class="a" style="left:1217.7px;top:723px" width="40.6" height="41" viewBox="220 165 610 615"><defs><clipPath id="p2c"><ellipse cx="525" cy="472.5" rx="305" ry="307.5"/></clipPath><filter id="p2b" x="-10%" y="-10%" width="120%" height="120%"><feGaussianBlur stdDeviation="16"/></filter></defs><g clip-path="url(#p2c)"><rect x="180" y="120" width="700" height="700" fill="#c8b483"/><g filter="url(#p2b)"><path d="M200 420C250 250 420 160 600 170C500 200 380 280 330 420z" fill="#628e89"/><path d="M330 420C400 280 560 200 700 220C790 260 820 330 830 400C700 280 520 300 400 430z" fill="#9aa56a"/><path d="M220 480C300 420 400 400 420 430L420 520L220 560z" fill="#a89a50"/><rect x="200" y="480" width="650" height="16" fill="#b08550"/><rect x="200" y="640" width="120" height="40" fill="#151515"/><rect x="720" y="640" width="120" height="40" fill="#151515"/><ellipse cx="497" cy="440" rx="78" ry="108" fill="#b3846e"/><rect x="435" y="415" width="125" height="22" fill="#7a5548" opacity="0.8"/><rect x="465" y="500" width="60" height="12" fill="#8f5f52" opacity="0.7"/><path d="M420 400C415 330 470 305 520 315C580 325 595 380 585 430C570 380 540 355 480 360C450 365 430 380 420 400z" fill="#241c1a"/><path d="M445 540h100v70h-100z" fill="#b58670"/><path d="M310 690C340 620 420 600 450 585L500 640L560 560C640 590 720 630 740 700L640 800H400z" fill="#f1eff2"/></g></g></svg>
<div class="a nm" style="left:1182px;top:778px">Сергій Сергійович Т...</div>
<!--/THUMBS-->
<!--CONTROLS-->
<div class="a" style="left:18px;top:823.5px;font-size:12.5px;font-weight:bold;color:#fff;letter-spacing:-0.3px">10:52</div>
<div class="a" style="left:57px;top:823px;width:1px;height:14px;background:#dadce0"></div>
<div class="a" style="left:66.5px;top:823.5px;font-size:12.5px;font-weight:bold;color:#fff;letter-spacing:0px">ovh-tcbn-qgg</div>
<div class="a cb" style="left:662px;background:#ea4335"></div>
<svg class="a" style="left:669px;top:822px" width="16" height="16" viewBox="0 0 24 24"><use href="#micoff"/></svg>
<div class="a cb" style="left:701px;background:#ea4335"></div>
<svg class="a" style="left:708px;top:822px" width="16" height="16" viewBox="0 0 24 24"><path d="M4 6.5H15.5V17.5H5.5Q4 17.5 4 16z" fill="none" stroke="#fff" stroke-width="2"/><path d="M15.5 10.5L20.5 7v10l-5-3.5z" fill="#fff"/><path d="M3 3.5L20.5 21" stroke="#fff" stroke-width="2"/></svg>
<div class="a cb" style="left:740px;background:#3c4043"></div>
<svg class="a" style="left:746px;top:821px" width="18" height="18" viewBox="0 0 24 24"><circle cx="12" cy="12" r="9" fill="none" stroke="#fff" stroke-width="2.2"/><circle cx="8.6" cy="9.6" r="1.5" fill="#fff"/><circle cx="15.4" cy="9.6" r="1.5" fill="#fff"/><path d="M7 13.2h10a5 5 0 0 1-10 0z" fill="#fff"/></svg>
<div class="a cb" style="left:779px;background:#3c4043"></div>
<svg class="a" style="left:785px;top:822px" width="18" height="16" viewBox="0 0 24 20"><rect x="2" y="2.5" width="20" height="15" rx="1.5" fill="none" stroke="#fff" stroke-width="2.4"/><path d="M12 5.5l4.5 4.5h-3v4h-3v-4h-3z" fill="#fff"/></svg>
<div class="a cb" style="left:818px;background:#3c4043"></div>
<svg class="a" style="left:824px;top:820px" width="18" height="20" viewBox="0 0 24 26"><path d="M7.5 13V5.5a1.4 1.4 0 0 1 2.8 0V4a1.4 1.4 0 0 1 2.8 0v1a1.4 1.4 0 0 1 2.8 0v2a1.4 1.4 0 0 1 2.8 0v10.5c0 4-2.8 6.5-6.5 6.5-3 0-4.6-1.3-6-3.8L3 14.5c-.5-1 .8-2 1.8-1.2z" fill="none" stroke="#fff" stroke-width="1.8" stroke-linejoin="round"/><path d="M10.3 5.5v7M13.1 5v7.5M15.9 7v5.5" stroke="#fff" stroke-width="1.5"/></svg>
<div class="a cb" style="left:857px;background:#3c4043"></div>
<svg class="a" style="left:869.5px;top:822px" width="5" height="16" viewBox="0 0 5 16"><circle cx="2.5" cy="2.5" r="1.8" fill="#fff"/><circle cx="2.5" cy="8" r="1.8" fill="#fff"/><circle cx="2.5" cy="13.5" r="1.8" fill="#fff"/></svg>
<div class="a" style="left:896px;top:815px;width:42px;height:30px;border-radius:15px;background:#ea4335"></div>
<svg class="a" style="left:907px;top:825px" width="20" height="9" viewBox="0 0 20 9"><path d="M10 0.5C5.5 0.5 2 2.2 0.5 4.2c-.4.6-.3 1.2.1 1.7l1.4 1.5c.4.4.9.5 1.4.2l2.2-1.3c.4-.2.6-.6.6-1V3.8c1.2-.4 2.5-.6 3.8-.6s2.6.2 3.8.6v1.5c0 .4.2.8.6 1l2.2 1.3c.5.3 1 .2 1.4-.2l1.4-1.5c.4-.5.5-1.1.1-1.7C18 2.2 14.5 0.5 10 0.5z" fill="#fff"/></svg>
<!-- right icons -->
<svg class="a" style="left:1420px;top:821px" width="18" height="18" viewBox="0 0 18 18"><circle cx="9" cy="9" r="7.1" fill="none" stroke="#fff" stroke-width="2"/><rect x="8.1" y="7.8" width="1.8" height="5" fill="#fff"/><circle cx="9" cy="5.5" r="1.1" fill="#fff"/></svg>
<svg class="a" style="left:1455.5px;top:823px" width="19" height="14" viewBox="0 0 19 14"><circle cx="7" cy="3.8" r="2.5" fill="none" stroke="#fff" stroke-width="2"/><path d="M1 12.3c0-4 12-4 12 0v.8H1z" fill="none" stroke="#fff" stroke-width="2"/><path d="M11.5 1a3 3 0 0 1 0 5.6a3.5 3.5 0 0 0 0-5.6zM13.5 8.3c2.5.5 4.5 1.8 4.5 3.8v1.2h-3.2v-1.2c0-1.5-.5-2.8-1.3-3.8z" fill="#fff" stroke="#fff" stroke-width="0.8"/></svg>
<div class="a" style="left:1466px;top:805px;width:18px;height:15px;border-radius:8px;background:#5f6368;color:#fff;font-size:9px;font-weight:bold;text-align:center;line-height:15px;letter-spacing:-0.3px">11</div>
<svg class="a" style="left:1493px;top:822px" width="17" height="16" viewBox="0 0 17 16"><path d="M1.8 1.3H15.2V11.7H4.5L1.8 14.5z" fill="none" stroke="#fff" stroke-width="2" stroke-linejoin="round"/><path d="M4.5 4.5h8M4.5 6.7h8M4.5 8.9h5" stroke="#fff" stroke-width="1.3"/></svg>
<svg class="a" style="left:1529.5px;top:822.5px" width="16" height="15" viewBox="0 0 16 15"><path d="M7.2 0.3L11 6.5H3.4z" fill="#8ab4f8"/><rect x="0.3" y="8.3" width="6" height="6" fill="#8ab4f8"/><circle cx="12" cy="11.3" r="3.3" fill="#8ab4f8"/></svg>
<svg class="a" style="left:1565px;top:821px" width="18" height="18" viewBox="0 0 18 18"><path d="M9 16.2H2.2V7.2H12.8V9" fill="none" stroke="#fff" stroke-width="2"/><path d="M4.5 7V4.5a3 3 0 0 1 6 0V7" fill="none" stroke="#fff" stroke-width="2"/><circle cx="13" cy="13.3" r="3.7" fill="#fff"/><path d="M11.3 12.4h3.4M11.3 14.2h3.4" stroke="#202124" stroke-width="0.9"/></svg>

<!--/CONTROLS-->
<!--TASKBAR-->
<!-- windows logo -->
<div class="a" style="left:13px;top:869px;width:10px;height:10px;background:linear-gradient(135deg,#5eb2f0,#3a8fe0);border-radius:1px"></div>
<div class="a" style="left:24px;top:869px;width:10px;height:10px;background:linear-gradient(135deg,#4a9fe8,#2f7fd5);border-radius:1px"></div>
<div class="a" style="left:13px;top:880px;width:10px;height:10px;background:linear-gradient(135deg,#4a9fe8,#2f7fd5);border-radius:1px"></div>
<div class="a" style="left:24px;top:880px;width:10px;height:10px;background:linear-gradient(135deg,#3a8fe0,#2570c8);border-radius:1px"></div>
<!-- opera -->
<svg class="a" style="left:63px;top:868px" width="24" height="24" viewBox="0 0 24 24"><defs><linearGradient id="op" x1="0" y1="0" x2="0" y2="1"><stop offset="0" stop-color="#ff1b2d"/><stop offset="1" stop-color="#a70014"/></linearGradient></defs><ellipse cx="12" cy="12" rx="11" ry="11.2" fill="url(#op)"/><ellipse cx="12" cy="12" rx="4.8" ry="8" fill="#e3ebf6"/></svg>
<!-- chrome 1 -->
<svg class="a" style="left:110px;top:866px" width="30" height="28" viewBox="0 0 30 28"><use href="#chromeic"/></svg>
<div class="a" style="left:108.5px;top:897.5px;width:31px;height:3px;background:#0067c0;border-radius:1.5px 1.5px 0 0"></div>
<!-- viber -->
<svg class="a" style="left:161px;top:867px" width="28" height="28" viewBox="0 0 28 28"><path d="M12 2C5 2 2.5 5.5 2.5 11.5c0 4 1.5 6.5 4 8V24l3.5-3.3c.7.1 1.3.1 2 .1 7 0 9.5-3.5 9.5-9.3S19 2 12 2z" fill="#7b58d6"/><path d="M8.5 7.5c-.8.6-1 1.5-.6 2.5 1.2 3 3.3 5.2 6.3 6.4 1 .4 1.9.1 2.4-.7.3-.5.2-1-.3-1.4l-1.4-1c-.5-.3-1-.2-1.3.2l-.4.5c-1.4-.6-2.5-1.7-3.1-3.1l.5-.4c.4-.3.5-.8.2-1.3l-1-1.4c-.3-.5-.8-.6-1.3-.3z" fill="#fff"/><path d="M13 5.5a5.5 5.5 0 0 1 5.5 5.5M13 7.8a3.2 3.2 0 0 1 3.2 3.2" fill="none" stroke="#c9b8f5" stroke-width="1"/><rect x="13" y="11.5" width="14" height="14" rx="4" fill="#e8322c"/><path d="M19 15.5l1.8-1.2V22.5" fill="none" stroke="#fff" stroke-width="1.5"/></svg>
<div class="a" style="left:157px;top:897.5px;width:31.5px;height:3px;background:#0067c0;border-radius:1.5px 1.5px 0 0"></div>
<!-- active chrome -->
<div class="a" style="left:199px;top:862px;width:46px;height:37px;border-radius:4px;background:rgba(255,255,255,0.550);box-shadow:0 0 0 0.5px rgba(255,255,255,0.6)"></div>
<svg class="a" style="left:208px;top:866px" width="30" height="28" viewBox="0 0 30 28"><use href="#chromeic"/></svg>
<div class="a" style="left:202px;top:897.5px;width:40px;height:3px;background:#0067c0;border-radius:1.5px 1.5px 0 0"></div>
<!-- paint -->
<svg class="a" style="left:258px;top:867px" width="26" height="26" viewBox="0 0 26 26"><defs><linearGradient id="pt" x1="0" y1="0" x2="1" y2="1"><stop offset="0" stop-color="#41c4f0"/><stop offset="1" stop-color="#1677d8"/></linearGradient></defs><path d="M12.5 3C6.5 3 2 7.5 2 13c0 4.5 3 8 7 8 1.5 0 2.3-1 2.3-2.2 0-1.5 1-2.5 2.5-2.5H17c3.5 0 6-2.3 6-5.5C23 6.5 18.5 3 12.5 3z" fill="url(#pt)"/><circle cx="6.5" cy="12.5" r="1.8" fill="#d93a2b"/><circle cx="9" cy="7.8" r="1.8" fill="#3fae49"/><circle cx="14" cy="6" r="1.8" fill="#f2c12e"/><path d="M12 13.5h1.2v-1.2h1.2v1.2h1.2v1.2h-1.2v1.2h-1.2v-1.2H12z" fill="#fff"/><rect x="17.5" y="6" width="3.5" height="8" rx="1" fill="#e8c9a0"/><rect x="17.8" y="13.5" width="2.9" height="10.5" rx="0.8" fill="#b87333"/></svg>
<div class="a" style="left:255px;top:897.5px;width:32px;height:3px;background:#0067c0;border-radius:1.5px 1.5px 0 0"></div>
<!-- tray -->
<svg class="a" style="left:1295px;top:876px" width="11" height="7" viewBox="0 0 11 7"><path d="M1 6l4.5-4.5L10 6" fill="none" stroke="#1b1b1b" stroke-width="1.1"/></svg>
<svg class="a" style="left:1319px;top:871px" width="12" height="18" viewBox="0 0 12 18"><rect x="3.2" y="0.5" width="5.6" height="10" rx="2.8" fill="#1b1b1b"/><path d="M1 8.5a5 5 0 0 0 10 0M6 13.5V17" fill="none" stroke="#1b1b1b" stroke-width="1.2"/></svg>
<svg class="a" style="left:1343px;top:871px" width="11" height="18" viewBox="0 0 11 18"><path d="M1.5 5L9 12.5 5.5 16V2L9 5.5 1.5 13" fill="none" stroke="#1b1b1b" stroke-width="1.1"/></svg>
<svg class="a" style="left:1364.5px;top:871.5px" width="17" height="17" viewBox="0 0 17 17"><circle cx="8.5" cy="8.5" r="8.2" fill="#e01f3d"/><circle cx="9" cy="10" r="3" fill="none" stroke="#fff" stroke-width="1.8"/><path d="M6 3.5V10" stroke="#fff" stroke-width="1.8"/></svg>
<svg class="a" style="left:1388px;top:872px" width="18" height="16" viewBox="0 0 18 16"><rect x="1.5" y="5" width="13.5" height="8.5" rx="1.5" fill="none" stroke="#1b1b1b" stroke-width="1.3"/><rect x="15.5" y="7.5" width="1.8" height="3.5" rx="0.6" fill="#1b1b1b"/><rect x="3.2" y="6.7" width="10" height="5" fill="#1b1b1b"/><path d="M3.5 0.5L5.5 4.5H3L5 8" fill="none" stroke="#1b1b1b" stroke-width="1.4"/></svg>
<svg class="a" style="left:1412px;top:872px" width="18" height="14" viewBox="0 0 18 14"><path d="M1 4.8a11.5 11.5 0 0 1 16 0M3.5 7.5a8 8 0 0 1 11 0M6 10a4.5 4.5 0 0 1 6 0" fill="none" stroke="#1b1b1b" stroke-width="1.3"/><circle cx="9" cy="12.3" r="1.3" fill="#1b1b1b"/></svg>
<svg class="a" style="left:1436px;top:873px" width="17" height="14" viewBox="0 0 17 14"><path d="M1 4.8h2.8L7.5 1.5v11L3.8 9.2H1z" fill="none" stroke="#1b1b1b" stroke-width="1.1" stroke-linejoin="round"/><path d="M9.8 4.5a3.5 3.5 0 0 1 0 5M11.8 2.8a6 6 0 0 1 0 8.4" fill="none" stroke="#1b1b1b" stroke-width="1.1"/><path d="M13.8 1.2a8.3 8.3 0 0 1 0 11.6" fill="none" stroke="#9aa0a8" stroke-width="1"/></svg>
<div class="a" style="left:1463.5px;top:873.5px;font-size:11px;color:#1b1b1b;letter-spacing:-0.35px">ENG</div>
<div class="a" style="left:1490px;top:861.8px;width:72px;text-align:center;font-size:11.3px;line-height:18px;color:#1b1b1b;letter-spacing:-0.3px">10:52<br>25.10.2023</div>
<svg class="a" style="left:1570px;top:873px" width="15" height="15" viewBox="0 0 15 15"><path d="M1.7 0.8H13.3q.9 0 .9.9V10.3q0 .9-.9.9H10.3L7.5 14 4.7 11.2H1.7q-.9 0-.9-.9V1.7q0-.9.9-.9z" fill="none" stroke="#1b1b1b" stroke-width="1.1"/></svg>
<svg width="0" height="0" style="position:absolute"><defs><g id="chromeic"><circle cx="12" cy="14" r="11" fill="#fff"/><path d="M12 14L2.5 8.5A11 11 0 0 1 21.5 8.5z" fill="#ea4335"/><path d="M12 14L21.5 8.5A11 11 0 0 1 12 25z" fill="#fbbc04"/><path d="M12 14L12 25A11 11 0 0 1 2.5 8.5z" fill="#34a853"/><circle cx="12" cy="14" r="5" fill="#fff"/><circle cx="12" cy="14" r="4" fill="#4285f4"/><circle cx="19" cy="8" r="6.5" fill="#8d8a60"/><circle cx="19" cy="7" r="2.2" fill="#c89d7c"/><path d="M15 12.5q4-4 8 0q-4 3.5-8 0z" fill="#f0f0f0"/><circle cx="20" cy="19" r="7.5" fill="#948f68"/><circle cx="20" cy="17.5" r="2.6" fill="#c89d7c"/><path d="M15 23.5q5-5 10 0q-5 4.5-10 0z" fill="#f0f0f0"/><path d="M17.5 16q2.5-2.5 5 0z" fill="#2a2220"/></g></defs></svg>

<!--/TASKBAR-->
</body></html>
